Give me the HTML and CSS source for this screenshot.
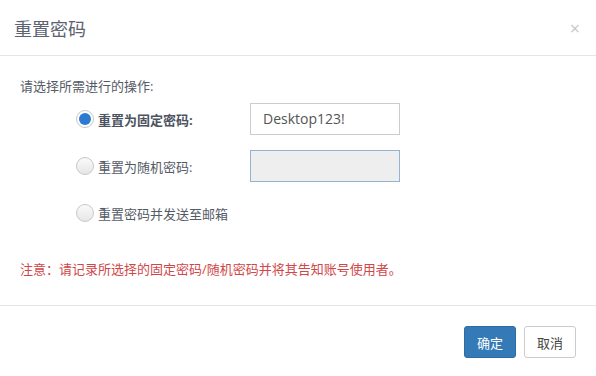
FILE: index.html
```html
<!DOCTYPE html>
<html lang="zh-CN">
<head>
  <meta charset="UTF-8" />
  <title>重置密码</title>
  <link rel="stylesheet" href="styles.css">
</head>
<body>
  <div class="modal">
    <div class="modal-header">
      <h4 class="modal-title">重置密码</h4>
      <span class="close">&times;</span>
    </div>

    <div class="modal-body">
      <p class="lead">请选择所需进行的操作:</p>

      <div class="options">
        <label class="option">
          <span class="radio checked"></span>
          <span class="option-text strong">重置为固定密码:</span>
          <span class="field">Desktop123!</span>
        </label>
        <label class="option">
          <span class="radio"></span>
          <span class="option-text">重置为随机密码:</span>
          <span class="field disabled"></span>
        </label>
        <label class="option">
          <span class="radio"></span>
          <span class="option-text">重置密码并发送至邮箱</span>
        </label>
      </div>

      <p class="notice">注意：请记录所选择的固定密码/随机密码并将其告知账号使用者。</p>
    </div>

    <div class="modal-footer">
      <button class="btn btn-primary">确定</button>
      <button class="btn btn-default">取消</button>
    </div>
  </div>
</body>
</html>
```

FILE: styles.css
```css
body {
  margin: 0;
  background: #fff;
  font-family: "Open Sans", "Noto Sans CJK SC", sans-serif;
  font-size: 13px;
  color: #555;
}

.modal {
  width: 596px;
  height: 376px;
  background: #fff;
}

.modal-header {
  height: 56px;
  border-bottom: 1px solid #e5e5e5;
  display: flex;
  align-items: center;
  justify-content: space-between;
  padding: 0 16px 0 14px;
  box-sizing: border-box;
}

.modal-title {
  margin: 0;
  font-size: 18px;
  font-weight: normal;
  color: #5b6270;
}

.close {
  font-size: 18px;
  color: #c8c8c8;
  line-height: 1;
}

.modal-body {
  padding: 20px 20px 0 20px;
  height: 250px;
  box-sizing: border-box;
  border-bottom: 1px solid #e5e5e5;
}

.lead {
  margin: 0;
  line-height: 20px;
  color: #555b66;
}

.options {
  margin: 7px 0 0 56px;
}

.option {
  display: flex;
  align-items: center;
  height: 32px;
  margin-bottom: 15px;
  color: #555b66;
}

.option:last-child {
  margin-bottom: 0;
}

.radio {
  width: 16px;
  height: 16px;
  border-radius: 50%;
  border: 1px solid #c8c8c8;
  background: linear-gradient(#fafafa, #e6e6e6);
  position: relative;
  margin-right: 4px;
}

.radio.checked {
  background: #fff;
}

.radio.checked::after {
  content: "";
  position: absolute;
  left: 2px;
  top: 2px;
  width: 12px;
  height: 12px;
  border-radius: 50%;
  background: #2d7bd1;
}

.option-text {
  width: 152px;
}

.strong {
  font-weight: bold;
  color: #4d5360;
}

.field {
  width: 150px;
  height: 32px;
  box-sizing: border-box;
  border: 1px solid #ccc;
  padding: 0 12px;
  line-height: 30px;
  font-size: 14px;
  color: #555;
}

.field.disabled {
  background: #eee;
  border-color: #94b3d0;
}

.notice {
  margin: 30px 0 0 0;
  line-height: 20px;
  color: #d0474a;
}

.modal-footer {
  display: flex;
  justify-content: flex-end;
  gap: 8px;
  padding: 20px 20px 0 0;
}

.btn {
  height: 32px;
  padding: 0 12px;
  font-family: "Noto Sans CJK SC", sans-serif;
  font-size: 13px;
  border-radius: 3px;
  border: 1px solid #ccc;
  background: #fff;
  color: #444;
}

.btn-primary {
  background: #337ab7;
  border-color: #2e6da4;
  color: #fff;
}
```
